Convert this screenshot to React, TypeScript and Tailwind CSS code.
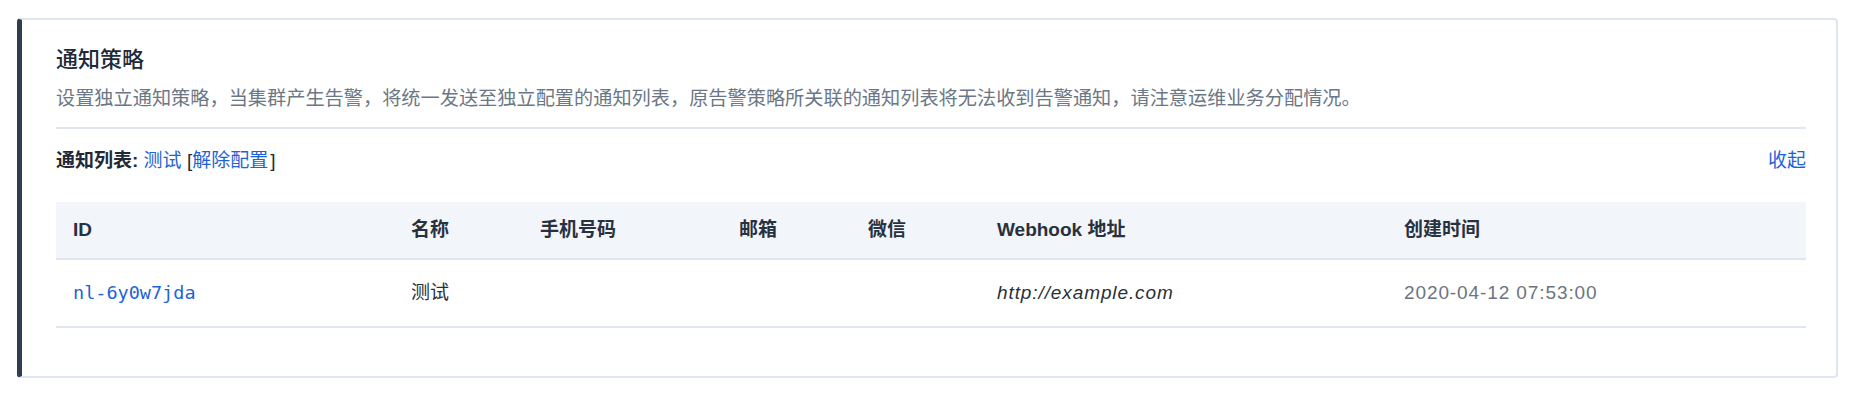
import React from "react";

const FONT = '"Liberation Sans", "Noto Sans CJK SC", sans-serif';

export default function App() {
  const cols = "grid grid-cols-[338px_129px_199px_129px_129px_407px_1fr]";
  return (
    <div className="w-[1870px] h-[406px] bg-white" style={{ fontFamily: FONT }}>
      <div className="pt-[18px] pl-[17px] pr-[32px]">
        <div className="rounded-[4px] border-2 border-l-[5px] border-[#dfe6ed] border-l-[#2e3d4f] bg-white pl-[34px] pr-[30px] pt-[24px] pb-[48px]">
          <div className="text-[22px] leading-[32px] font-medium text-[#1f2937]">通知策略</div>
          <div className="mt-[8px] text-[19.2px] leading-[30px] text-[#6b7785]">
            设置独立通知策略，当集群产生告警，将统一发送至独立配置的通知列表，原告警策略所关联的通知列表将无法收到告警通知，请注意运维业务分配情况。
          </div>
          <div className="mt-[13px] h-[2px] bg-[#dfe6ed]" />
          <div className="mt-[17px] flex items-center justify-between text-[19px] leading-[30px]">
            <div>
              <span className="font-bold text-[#1f2937]">通知列表: </span>
              <span className="text-[#1e63d6]">测试</span>
              <span className="text-[#1f2937]"> [</span>
              <span className="text-[#1e63d6]">解除配置</span>
              <span className="text-[#1f2937] pl-[2px]">]</span>
            </div>
            <div className="text-[#1e63d6]">收起</div>
          </div>
          <div className="mt-[26px]">
            <div className={`${cols} h-[58px] items-center bg-[#f2f5f9] border-b-2 border-[#dfe6ed] text-[19px] font-semibold text-[#28313f]`}>
              <div className="pl-[17px]">ID</div>
              <div className="pl-[17px]">名称</div>
              <div className="pl-[17px]">手机号码</div>
              <div className="pl-[17px]">邮箱</div>
              <div className="pl-[17px]">微信</div>
              <div className="pl-[17px]">Webhook 地址</div>
              <div className="pl-[17px]">创建时间</div>
            </div>
            <div className={`${cols} h-[68px] items-center border-b-2 border-[#dfe6ed] text-[19px]`}>
              <div
                className="pl-[17px] text-[#1e63d6]"
                style={{ fontFamily: '"DejaVu Sans Mono", "Liberation Mono", monospace', fontSize: "18.5px" }}
              >
                nl-6y0w7jda
              </div>
              <div className="pl-[17px] text-[#2b2f36]">测试</div>
              <div className="pl-[17px]" />
              <div className="pl-[17px]" />
              <div className="pl-[17px]" />
              <div className="pl-[17px] italic tracking-[0.9px] text-[#2b2f36]">http://example.com</div>
              <div className="pl-[17px] tracking-[0.9px] text-[#6b7480]">2020-04-12 07:53:00</div>
            </div>
          </div>
        </div>
      </div>
    </div>
  );
}
